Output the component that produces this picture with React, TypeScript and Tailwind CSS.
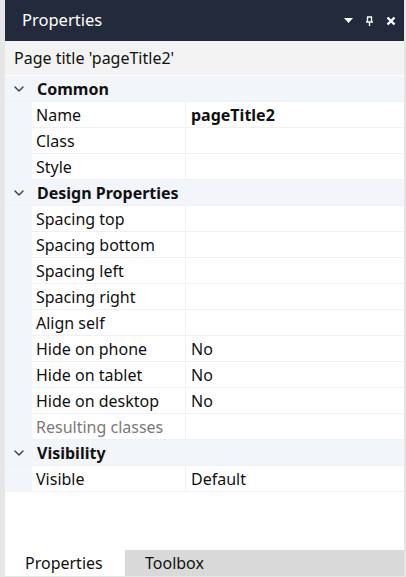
import { ChevronDown } from 'lucide-react'

type Row = { name: string; value?: string; bold?: boolean; muted?: boolean }
type Group = { title: string; rows: Row[] }

const groups: Group[] = [
  {
    title: 'Common',
    rows: [{ name: 'Name', value: 'pageTitle2', bold: true }, { name: 'Class' }, { name: 'Style' }],
  },
  {
    title: 'Design Properties',
    rows: [
      { name: 'Spacing top' },
      { name: 'Spacing bottom' },
      { name: 'Spacing left' },
      { name: 'Spacing right' },
      { name: 'Align self' },
      { name: 'Hide on phone', value: 'No' },
      { name: 'Hide on tablet', value: 'No' },
      { name: 'Hide on desktop', value: 'No' },
      { name: 'Resulting classes', muted: true },
    ],
  },
  {
    title: 'Visibility',
    rows: [{ name: 'Visible', value: 'Default' }],
  },
]

function PinIcon() {
  return (
    <svg width="9" height="10" viewBox="0 0 9 10" fill="none">
      <path d="M2 1h5M2.5 1v5M6.5 1v5M1 6h7M4.5 6v4" stroke="white" strokeWidth="1.4" />
    </svg>
  )
}

function CloseIcon() {
  return (
    <svg width="10" height="10" viewBox="0 0 10 10">
      <path d="M1.5 1.5l7 7M8.5 1.5l-7 7" stroke="white" strokeWidth="2.4" />
    </svg>
  )
}

export default function App() {
  return (
    <div
      className="w-[406px] h-[577px] flex flex-col bg-[#e6e6e6] pl-[5px] pr-[2px] pb-[1px] text-[16px] text-[#111]"
      style={{ fontFamily: '"Noto Sans", "Open Sans", sans-serif' }}
    >
      {/* Title bar */}
      <div className="h-[41px] shrink-0 flex items-center bg-[#232a3b] text-white pl-[17px] pr-[8px]">
        <span className="text-[16.5px] flex-1">Properties</span>
        <div className="flex items-center gap-[12px]">
          <svg width="9" height="5" viewBox="0 0 9 5">
            <path d="M0 0h9L4.5 5z" fill="white" />
          </svg>
          <PinIcon />
          <CloseIcon />
        </div>
      </div>

      {/* Selected element */}
      <div className="h-[34px] shrink-0 flex items-center bg-[#f3f3f3] pl-[9px]">Page title 'pageTitle2'</div>

      {/* Property grid */}
      <div className="flex-1 bg-white flex flex-col pt-[1px]">
        {groups.map((g) => (
          <div key={g.title}>
            <div className="h-[26px] flex items-center bg-[#f2f5fa] border-b border-[#eef2f7]">
              <div className="w-[27px] flex justify-center">
                <ChevronDown size={16} strokeWidth={2.2} className="text-[#444]" />
              </div>
              <span className="font-bold pl-[5px]">{g.title}</span>
            </div>
            {g.rows.map((r) => (
              <div key={r.name} className="h-[26px] flex bg-[#f2f5fa]">
                <div className="w-[27px]" />
                <div className="flex-1 flex bg-white border-b border-[#eef2f7]">
                  <div
                    className={`w-[154px] flex items-center pl-[4px] border-r border-[#eef2f7] ${r.muted ? 'text-[#7a7a7a]' : ''}`}
                  >
                    {r.name}
                  </div>
                  <div className={`flex-1 flex items-center pl-[5px] ${r.bold ? 'font-bold' : ''}`}>{r.value}</div>
                </div>
              </div>
            ))}
          </div>
        ))}
      </div>

      {/* Tabs */}
      <div className="h-[26px] shrink-0 flex bg-[#d9d9d9]">
        <div className="w-[120px] bg-white flex items-center pl-[20px]">Properties</div>
        <div className="flex items-center pl-[20px]">Toolbox</div>
      </div>
    </div>
  )
}
